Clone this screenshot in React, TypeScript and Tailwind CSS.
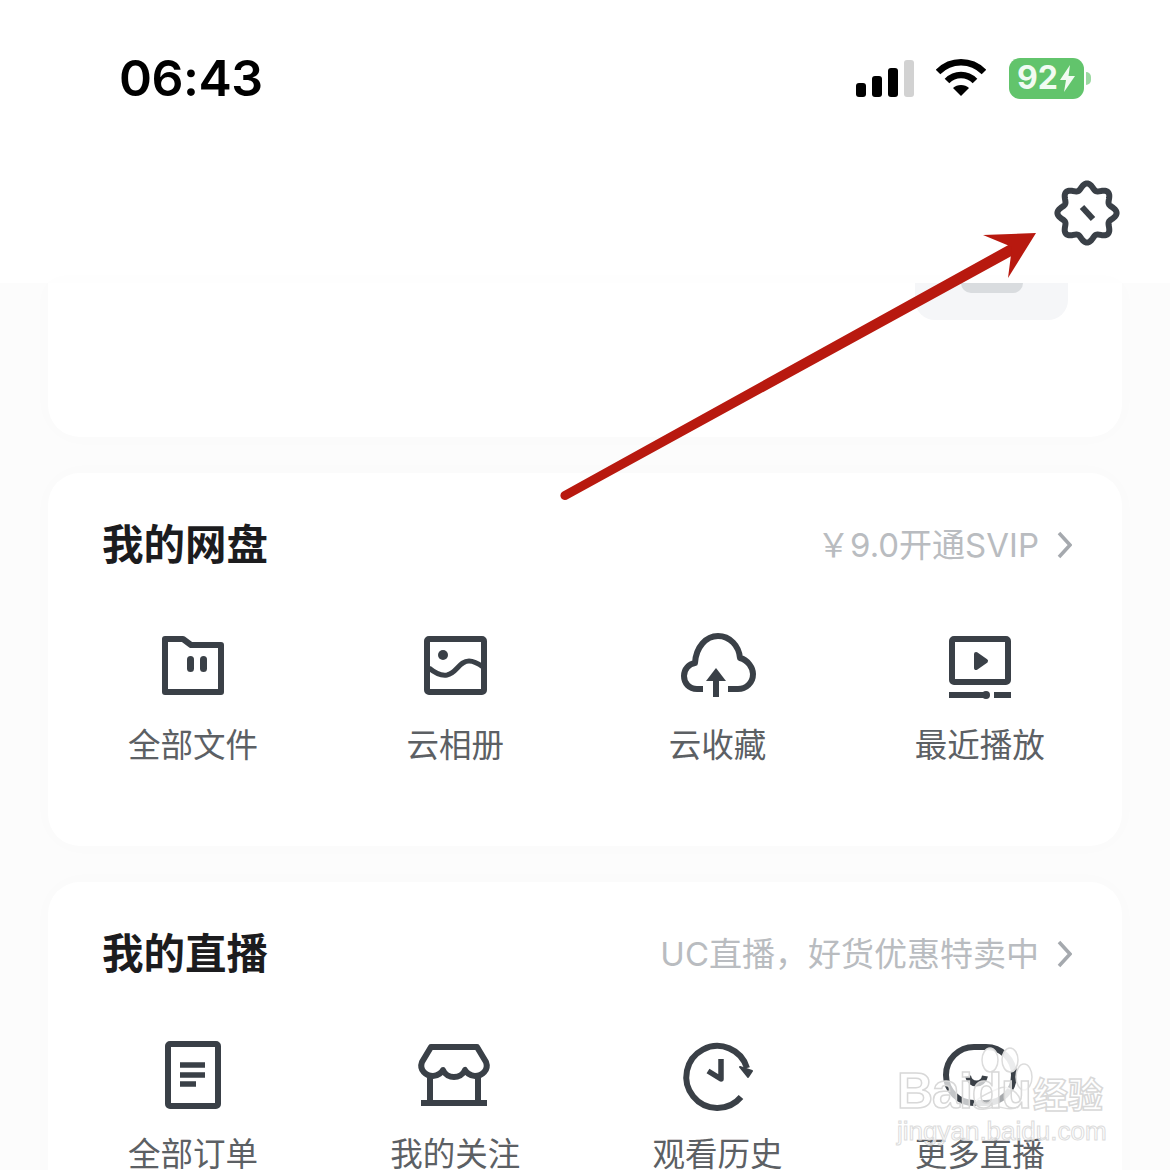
import React from "react";

const cjk = "font-['Noto_Sans_CJK_SC','Noto_Sans',sans-serif]";
const S = "#3a4047";

function Ic({ children }: { children: React.ReactNode }) {
  return (
    <svg width="80" height="80" viewBox="0 0 80 80" fill="none" stroke={S} strokeWidth="6" strokeLinejoin="round">
      {children}
    </svg>
  );
}

const Folder = () => (
  <Ic>
    <path d="M12 14H30L38 20H68V67H12Z" />
    <rect x="34" y="31" width="7" height="16" rx="3.5" fill={S} stroke="none" />
    <rect x="47" y="31" width="7" height="16" rx="3.5" fill={S} stroke="none" />
  </Ic>
);
const Picture = () => (
  <Ic>
    <rect x="12" y="14" width="57" height="53" rx="2" />
    <circle cx="28" cy="30" r="5" fill={S} stroke="none" />
    <path d="M14 43C20 48 26 51 32 50C42 48 44 36 54 36C60 36 64 39 68 42" strokeWidth="5" />
  </Ic>
);
const Cloud = () => (
  <Ic>
    <path d="M25 64H19C11 64 6 58 6 51C6 44 11 39 17 38C18 22 28 11 40 11C52 11 61 21 62 33C70 35 75 43 75 49C75 58 68 64 60 64H50" strokeLinecap="butt" />
    <path d="M38 43L48 56H28Z" fill={S} stroke="none" />
    <path d="M38 52V72" />
  </Ic>
);
const Video = () => (
  <Ic>
    <rect x="12" y="14" width="56" height="43" rx="2" />
    <path d="M36 29L46 36L36 43Z" fill={S} strokeWidth="4" />
    <path d="M9 70H46M54 70H71" />
    <circle cx="46" cy="70" r="4" fill={S} stroke="none" />
  </Ic>
);
const Doc = () => (
  <Ic>
    <rect x="15" y="10" width="50" height="62" rx="2" />
    <path d="M27 31H52M27 41H52M27 50H43" strokeWidth="5.5" />
  </Ic>
);
const Shop = () => (
  <Ic>
    <path d="M16 13H62L71 28C74 36 67 42 60 42C55 42 51 38 50 36C48 41 43 43 39 43C35 43 30 41 28 36C27 38 23 42 18 42C11 42 4 36 7 28Z" />
    <path d="M15 40V69M63 40V69M6 69H72" />
  </Ic>
);
const Clock = () => (
  <Ic>
    <path d="M63 63A31 31 0 1 1 69 34" strokeLinecap="butt" />
    <path d="M62 33L74 37L70 43Z" fill={S} strokeWidth="2" />
    <path d="M43 25V45L30 37" strokeWidth="5.5" />
  </Ic>
);
const Face = () => (
  <Ic>
    <rect x="6" y="13" width="68" height="56" rx="28" />
    <path d="M28 42C30 52 43 52 45 42" />
  </Ic>
);

function gearPath() {
  const pts: string[] = [];
  for (let i = 0; i < 240; i++) {
    const t = (i / 240) * Math.PI * 2;
    const r = 26.6 + 3 * Math.cos(8 * t);
    pts.push(`${(40 + r * Math.sin(t)).toFixed(2)} ${(40 - r * Math.cos(t)).toFixed(2)}`);
  }
  return "M" + pts.join("L") + "Z";
}

function Tile({ icon, label }: { icon: React.ReactNode; label: string }) {
  return (
    <div className="flex flex-col items-center">
      {icon}
      <span className="mt-[16px] text-[32.5px] leading-[44px] text-[#5c6064] whitespace-nowrap">{label}</span>
    </div>
  );
}

function Section({ title, hint, items }: { title: string; hint: string; items: [React.ReactNode, string][] }) {
  return (
    <section className="bg-white rounded-[32px] shadow-[0_0_24px_rgba(0,0,0,0.015)] h-[373px] shrink-0">
      <div className="h-[152px] pt-[41px] pl-[54px] pr-[50px]">
        <div className="flex items-center justify-between h-[56px]">
          <h2 className="text-[41.5px] font-semibold text-[#1c1c1e] leading-[56px] whitespace-nowrap">{title}</h2>
          <div className="flex items-center gap-[18px] mt-[5px]">
            <span className="font-['Inter','Noto_Sans_CJK_SC',sans-serif] text-[33px] leading-[44px] text-[#b9bcc0] whitespace-nowrap">{hint}</span>
            <svg width="15" height="28" viewBox="0 0 15 28" fill="none" stroke="#a5a9ae" strokeWidth="3.5">
              <path d="M2 2L13 14L2 26" />
            </svg>
          </div>
        </div>
      </div>
      <div className="grid grid-cols-4 pl-[14px] pr-[11px]">
        {items.map(([ic, l]) => (
          <Tile key={l} icon={ic} label={l} />
        ))}
      </div>
    </section>
  );
}

export default function App() {
  return (
    <div className={`relative w-[1170px] h-[1170px] overflow-hidden bg-[#fcfcfc] ${cjk}`}>
      <header className="h-[283px] bg-white">
        <div className="flex items-center justify-between pt-[46px] pl-[119px] pr-[79px] h-[110px]">
          <span className="font-['Inter',sans-serif] text-[50px] font-semibold leading-[60px] text-black tracking-[-0.5px]">06:43</span>
          <div className="flex items-center">
            <div className="flex items-end gap-[6px] h-[37px]">
              <span className="w-[10px] h-[14px] rounded-[3px] bg-black" />
              <span className="w-[10px] h-[21px] rounded-[3px] bg-black" />
              <span className="w-[10px] h-[29px] rounded-[3px] bg-black" />
              <span className="w-[10px] h-[37px] rounded-[3px] bg-[#d2d2d2]" />
            </div>
            <svg className="ml-[22px]" width="50" height="38" viewBox="0 0 50 38" fill="none" stroke="#000" strokeWidth="6.5">
              <path d="M2 13C15 0 35 0 48 13" />
              <path d="M11 22C19 14 31 14 39 22" />
              <path d="M25 37L17 29C21 25 29 25 33 29Z" fill="#000" stroke="none" />
            </svg>
            <div className="ml-[23px] flex items-center gap-[2px]">
              <div className="w-[75px] h-[41px] rounded-[11px] bg-[#62c46c] flex items-center justify-center gap-[1px]">
                <span className="font-['Inter',sans-serif] text-[32px] font-bold leading-none text-[#f1fbf2]">92</span>
                <svg width="17" height="27" viewBox="0 0 17 27" fill="#f1fbf2">
                  <path d="M11 0L1 15H7L5 27L16 11H9.500Z" />
                </svg>
              </div>
              <span className="w-[5px] h-[13px] rounded-r-[5px] bg-[#9bd9a1]" />
            </div>
          </div>
        </div>
        <div className="flex justify-end pr-[43px] mt-[63px]">
          <svg width="80" height="80" viewBox="0 0 80 80" fill="none" stroke={S} strokeWidth="6">
            <path d={gearPath()} />
            <path d="M35 34L46 46" />
          </svg>
        </div>
      </header>

      <main className="flex flex-col gap-[36px] px-[48px]">
        <section className="bg-white rounded-b-[32px] h-[154px] shrink-0 shadow-[0_0_24px_rgba(0,0,0,0.015)] flex justify-end pr-[54px] items-start">
          <div className="w-[153px] h-[37px] bg-[#f5f6f8] rounded-b-[20px] flex justify-center">
            <div className="w-[62px] h-[10px] bg-[#d9dcdf] rounded-b-[10px]" />
          </div>
        </section>
        <Section
          title="我的网盘"
          hint="￥9.0开通SVIP"
          items={[
            [<Folder />, "全部文件"],
            [<Picture />, "云相册"],
            [<Cloud />, "云收藏"],
            [<Video />, "最近播放"],
          ]}
        />
        <Section
          title="我的直播"
          hint="UC直播，好货优惠特卖中"
          items={[
            [<Doc />, "全部订单"],
            [<Shop />, "我的关注"],
            [<Clock />, "观看历史"],
            [<Face />, "更多直播"],
          ]}
        />
      </main>

      {/* annotation arrow */}
      <svg className="absolute left-[550px] top-[220px]" width="500" height="290" viewBox="550 220 500 290" fill="none">
        <path d="M562 492L1012 243L1017 253L568 499A4.500 4.500 0 0 1 562 492Z" fill="#b8190f" />
        <path d="M1036 233L983 235L1012 247L1008 278Z" fill="#b8190f" />
      </svg>

      {/* watermark */}
      <div className="absolute left-[895px] top-[1045px] w-[215px] h-[100px]">
        <svg className="absolute left-0 top-0" width="215" height="70" viewBox="895 1045 215 70" fill="#ffffff" stroke="#dcdcdc" strokeWidth="1.500">
          <ellipse cx="990" cy="1060" rx="8" ry="12" fillOpacity="0.9" />
          <ellipse cx="1010" cy="1060" rx="8" ry="12" fillOpacity="0.9" />
          <ellipse cx="1024" cy="1077" rx="8" ry="13" fillOpacity="0.9" />
          <path d="M1000 1088C1010 1084 1026 1098 1018 1107C1010 1112 1002 1106 996 1107C988 1108 978 1112 974 1106C972 1100 990 1092 1000 1088Z" fillOpacity="0.55" />
        </svg>
        <span className="absolute left-[2px] top-[20px] font-['Liberation_Sans',sans-serif] font-bold text-[50px] leading-[52px] tracking-[-1px] text-white/70 [-webkit-text-stroke:1.5px_#d8d8d8]">Baidu</span>
        <span className="absolute left-[138px] top-[26px] text-[35px] leading-[44px] font-bold text-white/70 [-webkit-text-stroke:1.5px_#d8d8d8] whitespace-nowrap">经验</span>
        <span className="absolute left-[2px] top-[71px] font-['Liberation_Sans',sans-serif] text-[26px] leading-[30px] text-white/70 [-webkit-text-stroke:1px_#dcdcdc] whitespace-nowrap">jingyan.baidu.com</span>
      </div>
    </div>
  );
}
